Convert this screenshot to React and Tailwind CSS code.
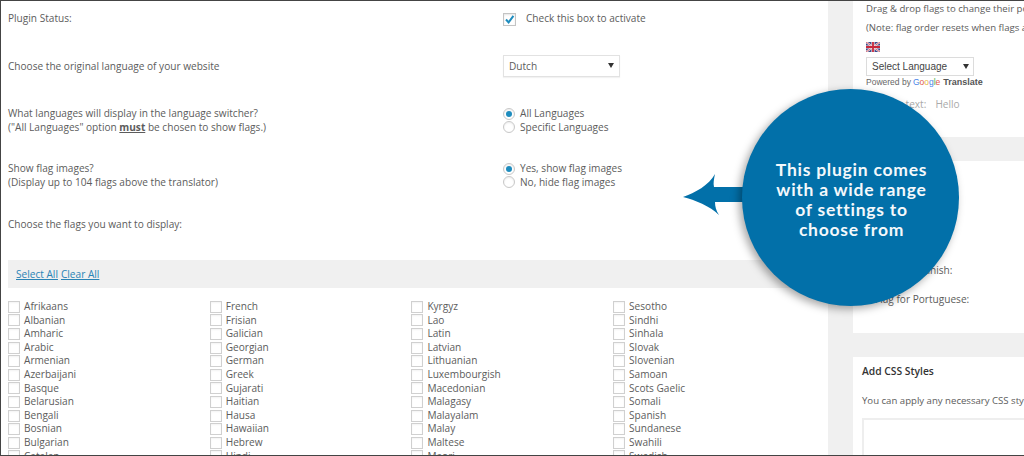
const columns = [
  ['Afrikaans', 'Albanian', 'Amharic', 'Arabic', 'Armenian', 'Azerbaijani', 'Basque', 'Belarusian', 'Bengali', 'Bosnian', 'Bulgarian', 'Catalan'],
  ['French', 'Frisian', 'Galician', 'Georgian', 'German', 'Greek', 'Gujarati', 'Haitian', 'Hausa', 'Hawaiian', 'Hebrew', 'Hindi'],
  ['Kyrgyz', 'Lao', 'Latin', 'Latvian', 'Lithuanian', 'Luxembourgish', 'Macedonian', 'Malagasy', 'Malayalam', 'Malay', 'Maltese', 'Maori'],
  ['Sesotho', 'Sindhi', 'Sinhala', 'Slovak', 'Slovenian', 'Samoan', 'Scots Gaelic', 'Somali', 'Spanish', 'Sundanese', 'Swahili', 'Swedish'],
]

const Radio = ({ checked, label }) => (
  <div className="flex items-center h-[13.6px]">
    <span className="w-[12px] h-[12px] rounded-full border border-[#c8c8c8] bg-white flex items-center justify-center shadow-[inset_0_1px_2px_rgba(0,0,0,0.08)]">
      {checked && <span className="w-[6px] h-[6px] rounded-full bg-[#1e8cbe]" />}
    </span>
    <span className="ml-[5px]">{label}</span>
  </div>
)

const Row = ({ height, left, children }) => (
  <div className={`grid grid-cols-[495px_1fr] pl-[7px] pt-[11px] ${height}`}>
    <div>{left}</div>
    <div>{children}</div>
  </div>
)

const UkFlag = () => (
  <svg width="14" height="10" viewBox="0 0 14 10" className="block">
    <rect width="14" height="10" fill="#3a4a8c" />
    <path d="M0 0L14 10M14 0L0 10" stroke="#f2e6e6" strokeWidth="2" />
    <path d="M0 0L14 10M14 0L0 10" stroke="#c8364a" strokeWidth="0.7" />
    <path d="M7 0V10M0 5H14" stroke="#f2e6e6" strokeWidth="3.2" />
    <path d="M7 0V10M0 5H14" stroke="#c8283c" strokeWidth="1.8" />
  </svg>
)

export default function App() {
  return (
    <div className="relative w-[1024px] h-[456px] overflow-hidden bg-white border-t border-l border-b border-[#444] font-['Open_Sans',sans-serif] text-[10.1px] leading-[13.6px] text-[#5c5c5c]">
      <div className="flex h-full">
        {/* settings form */}
        <div className="w-[827px] shrink-0">
          <Row height="h-[48px]" left="Plugin Status:">
            <div className="flex items-start">
              <span className="mt-[1px] w-[13px] h-[13px] border border-[#c4c4c4] flex items-center justify-center shadow-[inset_0_1px_2px_rgba(0,0,0,0.1)]">
                <svg width="11" height="11" viewBox="0 0 11 11">
                  <path d="M2 5.5L4.6 8.4L9.4 1.8" fill="none" stroke="#1e8cbe" strokeWidth="2" />
                </svg>
              </span>
              <span className="ml-[10px]">Check this box to activate</span>
            </div>
          </Row>
          <Row height="h-[47px]" left="Choose the original language of your website">
            <div className="relative -mt-[5px] w-[117px] h-[22px] border border-[#e2e2e2] flex items-center pl-[5px] pt-[2px] shadow-[0_1px_1px_rgba(0,0,0,0.05)]">
              Dutch
              <span className="absolute right-[5px] top-[7px] w-0 h-0 border-x-[3px] border-x-transparent border-t-[5px] border-t-[#333]" />
            </div>
          </Row>
          <Row
            height="h-[55px]"
            left={
              <>
                What languages will display in the language switcher?
                <br />
                ("All Languages" option <span className="font-bold underline">must</span> be chosen to show flags.)
              </>
            }
          >
            <Radio checked label="All Languages" />
            <Radio label="Specific Languages" />
          </Row>
          <Row
            height="h-[56px]"
            left={
              <>
                Show flag images?
                <br />
                (Display up to 104 flags above the translator)
              </>
            }
          >
            <Radio checked label="Yes, show flag images" />
            <Radio label="No, hide flag images" />
          </Row>
          <Row height="h-[53px]" left="Choose the flags you want to display:" />

          <div className="ml-[7px] h-[28px] bg-[#f0f0f0] flex items-center pl-[8px] pt-[2px] gap-[3px] text-[#2a83b5] underline">
            <span>Select All</span>
            <span>Clear All</span>
          </div>

          <div className="grid grid-cols-[201.7px_201.7px_201.7px_1fr] pl-[7px] pt-[12px]">
            {columns.map((names, i) => (
              <div key={i}>
                {names.map((name) => (
                  <div key={name} className="flex items-center h-[13.6px]">
                    <span className="w-[12px] h-[12px] shrink-0 border border-[#d0d0d0] bg-white shadow-[inset_0_1px_2px_rgba(0,0,0,0.05)]" />
                    <span className="ml-[4px]">{name}</span>
                  </div>
                ))}
              </div>
            ))}
          </div>
        </div>

        {/* grey gutter */}
        <div className="w-[25px] shrink-0 bg-[#f0f0f0]" />

        {/* sidebar */}
        <div className="flex-1 min-w-0 flex flex-col whitespace-nowrap overflow-hidden">
          <div className="h-[136px] shrink-0 pl-[13px] pt-[1px] bg-white">
            <div className="text-[9.6px]">Drag &amp; drop flags to change their positions</div>
            <div className="mt-[5px] text-[9.6px]">(Note: flag order resets when flags are changed)</div>
            <div className="mt-[8px]"><UkFlag /></div>
            <div className="mt-[5px] relative w-[108px] h-[19px] border border-[#dcdcdc] flex items-center pl-[5px] font-['Liberation_Sans',sans-serif] text-[10px] text-[#444]">
              Select Language
              <span className="absolute right-[4px] top-[6px] w-0 h-0 border-x-[3px] border-x-transparent border-t-[5px] border-t-[#333]" />
            </div>
            <div className="flex items-center font-['Liberation_Sans',sans-serif] text-[8.5px] text-[#666]">
              <span>Powered by</span>
              <span className="ml-[2px]">
                <span className="text-[#4a86e8]">G</span>
                <span className="text-[#e0584a]">o</span>
                <span className="text-[#e8b73a]">o</span>
                <span className="text-[#4a86e8]">g</span>
                <span className="text-[#4caf50]">l</span>
                <span className="text-[#e0584a]">e</span>
              </span>
              <span className="ml-[3px] font-bold text-[9px] text-[#555]">Translate</span>
            </div>
            <div className="mt-[8px] text-[#aaa]">
              Preview text:<span className="ml-[9px]">Hello</span>
            </div>
          </div>
          <div className="h-[24px] shrink-0 bg-[#f0f0f0]" />
          <div className="h-[172px] shrink-0 pl-[22px] pt-[103px]">
            <div>Flag for Spanish:</div>
            <div className="mt-[15px]">Flag for Portuguese:</div>
          </div>
          <div className="h-[24px] shrink-0 bg-[#f0f0f0]" />
          <div className="flex-1 pl-[9px] pt-[8px]">
            <div className="font-semibold text-[10.3px] text-[#333]">Add CSS Styles</div>
            <div className="mt-[15px] text-[9.6px]">You can apply any necessary CSS styles below</div>
            <div className="mt-[11px] h-[60px] border-2 border-[#eee] border-r-0" />
          </div>
        </div>
      </div>

      {/* callout */}
      <svg width="70" height="50" viewBox="0 0 70 50" className="absolute left-[682px] top-[172px]">
        <path d="M0 24C12 20 26 12 32 1C31 6 30 10 31 14H68V29H32C32 33 33 38 36 42C27 33 12 27 0 24Z" fill="#0270a9" />
      </svg>
      <div className="absolute left-[741px] top-[88px] w-[217px] h-[217px] rounded-full bg-[#0270a9] shadow-[-3px_3px_8px_rgba(0,0,0,0.35)] flex items-center justify-center pt-[4px] pl-[2px] text-center font-['Lato',sans-serif] font-bold text-[17.5px] leading-[20px] tracking-[0.75px] text-[#f4f8fb]">
        <div>
          This plugin comes
          <br />
          with a wide range
          <br />
          of settings to
          <br />
          choose from
        </div>
      </div>
    </div>
  )
}
